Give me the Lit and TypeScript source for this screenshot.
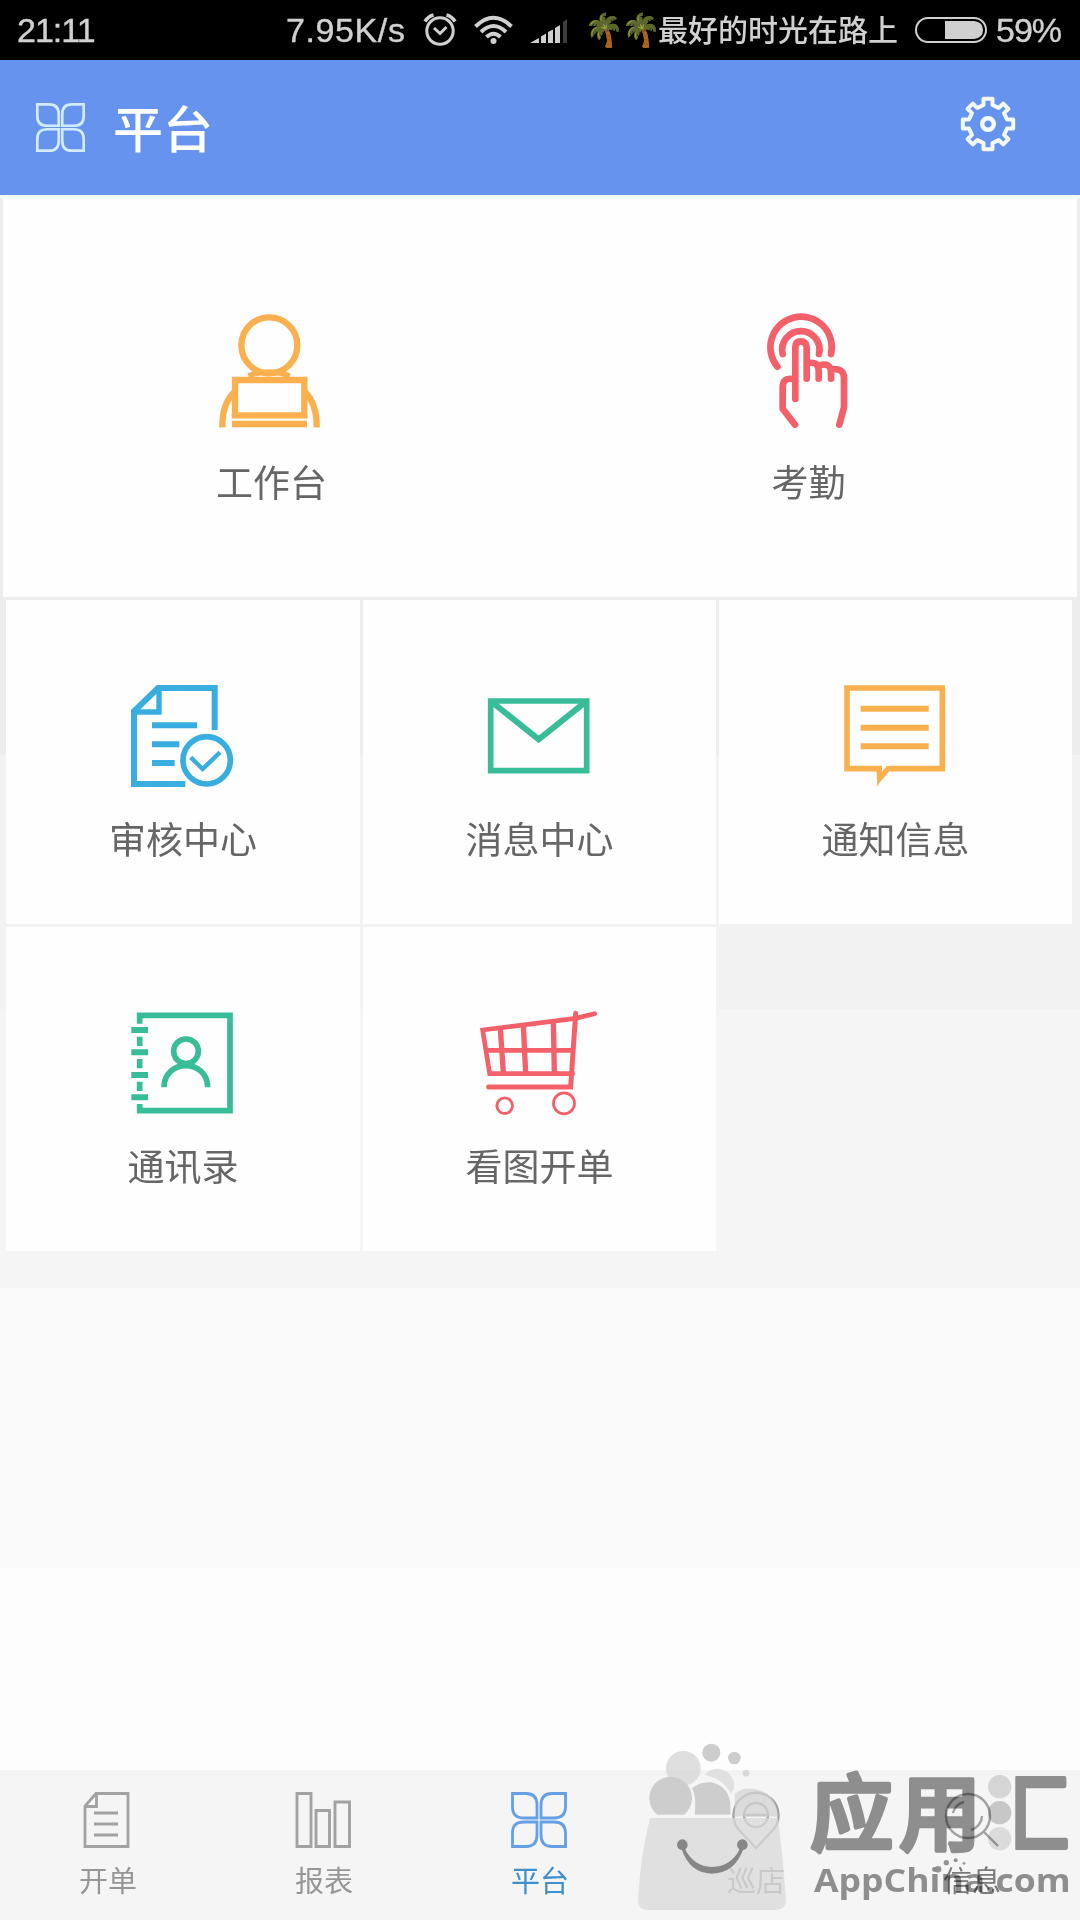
import { LitElement, html, svg, css } from "lit";
import { customElement } from "lit/decorators.js";

const ORANGE = "#fbb050";
const RED = "#f4606a";
const BLUE = "#38aee0";
const GREEN = "#38bd98";

const gearPath = (() => {
  const pts: string[] = [];
  for (let k = 0; k < 8; k++) {
    const a = (k * Math.PI) / 4;
    const w = k % 2 ? 3.7 : 4.5;
    for (const [r, t] of [[19, -w], [25.2, -w], [25.2, w], [19, w]]) {
      pts.push(`${(r * Math.cos(a) - t * Math.sin(a)).toFixed(2)} ${(r * Math.sin(a) + t * Math.cos(a)).toFixed(2)}`);
    }
  }
  return `M${pts.join("L")}Z`;
})();

const clover = (w: number) => svg`
  <g fill="none" stroke="currentColor" stroke-width=${w}>
    <path d="M1.5 1.5H15Q26 1.5 26 13V26H13Q1.5 26 1.5 15Z"/>
    <path d="M54.5 1.5H41Q30 1.5 30 13V26H43Q54.5 26 54.5 15Z"/>
    <path d="M1.5 54.5H15Q26 54.5 26 43V30H13Q1.5 30 1.5 41Z"/>
    <path d="M54.5 54.5H41Q30 54.5 30 43V30H43Q54.5 30 54.5 41Z"/>
  </g>`;

interface Tile { label: string; color: string; box: string; art: unknown; }

const TOP: Tile[] = [
  {
    label: "工作台", color: ORANGE, box: "97 58 360 360", art: svg`
      <circle cx="269" cy="164" r="84" stroke-width="19"/>
      <path d="M206 255Q240 244 269 244T330 255" stroke-width="16"/>
      <path d="M166 268H374V374H166Z" stroke-width="19"/>
      <path d="M157 400H382" stroke-width="19"/>
      <path d="M128 410Q127 340 164 304M411 410Q412 340 376 304" stroke-width="19"/>`,
  },
  {
    label: "考勤", color: RED, box: "57 58 360 360", art: svg`
      <g stroke-width="20" stroke-linecap="round" stroke-linejoin="round">
        <path d="M142 228A92 92 0 1 1 303 190"/>
        <path d="M158 190A56 56 0 1 1 267 190"/>
        <path d="M196 325V170Q196 152 212 152T230 170V264"/>
        <path d="M232 218Q266 210 266 240V264M268 224Q303 214 303 246V264M305 236Q342 232 342 262V350L328 402"/>
        <path d="M192 266Q158 258 158 290V354L195 402"/>
      </g>`,
  },
];

const TILES: Tile[] = [
  {
    label: "审核中心", color: BLUE, box: "99 45 360 360", art: svg`
      <path d="M374 210V84H204L132 154V372H286" stroke-width="18"/>
      <path d="M207 84V156H136" stroke-width="16"/>
      <path d="M186 196H321M186 253H268M186 309H254" stroke-width="18"/>
      <circle cx="350" cy="301" r="71" stroke-width="17"/>
      <path d="M302 292L338 327L390 277" stroke-width="13"/>`,
  },
  {
    label: "消息中心", color: GREEN, box: "58 15 360 360", art: svg`
      <path d="M90 93H378V302H90Z" stroke-width="17"/>
      <path d="M96 98L234 208L372 98" stroke-width="18"/>`,
  },
  {
    label: "通知信息", color: ORANGE, box: "106 45 360 360", art: svg`
      <path d="M244 326H139V84H425V326H268" stroke-width="17"/>
      <path d="M227 318H243V337L258 318H280L243 360Q236 368 230 380Z" fill="currentColor" stroke="none"/>
      <path d="M180 146H384M180 203H384M180 259H384" stroke-width="18"/>`,
  },
  {
    label: "通讯录", color: GREEN, box: "99 36 360 360", art: svg`
      <path d="M149 101V76H420V362H149V342" stroke-width="17"/>
      <path d="M149 140V168M149 207V235M149 275V303" stroke-width="17"/>
      <path d="M124 120H174M124 187H174M124 255H174M124 322H174" stroke-width="18"/>
      <circle cx="288" cy="184" r="37" stroke-width="17"/>
      <path d="M222 292C222 205 353 205 353 292" stroke-width="17"/>`,
  },
  {
    label: "看图开单", color: RED, box: "88 36 360 360", art: svg`
      <path d="M432 71L374 85L96 120L117 251H366" stroke-width="14" stroke-linecap="round"/>
      <path d="M375 70L360 291H114" stroke-width="15" stroke-linecap="round"/>
      <path d="M106 181H368" stroke-width="14"/>
      <path d="M149 116L158 248M218 106L225 248M308 94L311 248" stroke-width="16"/>
      <circle cx="162" cy="347" r="23.500" stroke-width="8.500"/>
      <circle cx="340" cy="340" r="31.500" stroke-width="8.500"/>`,
  },
];

const TABS = [
  { label: "开单", cls: "", art: svg`<g fill="none" stroke="currentColor" stroke-width="2.800">
      <path d="M16 1.500H48V54.500H5V14Z M16.500 1.500V14.500H5"/><path d="M14 21H38M14 32H38M14 43H38" stroke-width="3.200"/></g>` },
  { label: "报表", cls: "", art: svg`<g fill="none" stroke="currentColor" stroke-width="2.900">
      <path d="M1 1.500H15V54.500H1ZM20 18.500H33.500V54.500H20ZM39 10H53.500V54.500H39Z"/></g>` },
  { label: "平台", cls: "on", art: svg`<g transform="translate(-1 0)">${clover(2.8)}</g>` },
  { label: "巡店", cls: "faint", art: svg`<g fill="none" stroke="currentColor" stroke-width="2.4">
      <path d="M28 56L11 38A22.500 22.500 0 1 1 45 38Z"/><circle cx="28" cy="23" r="12"/><path d="M16 23H40"/></g>` },
  { label: "信息", cls: "dark", art: svg`<g fill="none" stroke="currentColor" stroke-width="2.4">
      <circle cx="24" cy="24" r="22"/><path d="M9 21A15 15 0 0 1 20 10M38 24A15 15 0 0 1 27 38M40 40L54 54"/></g>` },
];

@customElement("app-root")
export class AppRoot extends LitElement {
  static styles = css`
    :host {
      display: block;
      font-family: "Noto Sans CJK SC", sans-serif;
    }
    svg { display: block; flex: none; overflow: visible; }
    .page {
      position: relative;
      display: flex;
      flex-direction: column;
      width: 1080px;
      height: 1920px;
      overflow: hidden;
      background: #fdfdfd;
    }
    .status {
      display: flex;
      align-items: center;
      box-sizing: border-box;
      height: 60px;
      padding: 0 18px 0 17px;
      background: #000;
      color: #d0d0d0;
      font: 34px/60px "Liberation Sans", sans-serif;
      -webkit-text-stroke: 0.4px #d0d0d0;
      white-space: nowrap;
    }
    .time { flex: 1; letter-spacing: -1px; }
    .rate { width: 121px; margin-right: 17px; letter-spacing: 0.6px; }
    .alarm { margin-right: 18px; }
    .wifi { margin-right: 17px; }
    .signal { margin-right: 16px; }
    .palm { width: 37px; font: 32px/56px "Noto Color Emoji", sans-serif; opacity: .8; }
    .carrier { width: 241px; margin-right: 16px; font: 500 30px/54px "Noto Sans CJK SC", sans-serif; padding-bottom: 4px; -webkit-text-stroke: 0; }
    .battery { margin-right: 9px; }
    .pct { width: 66px; letter-spacing: -1px; }
    .header {
      display: flex;
      align-items: center;
      box-sizing: border-box;
      height: 135px;
      padding: 0 64px 0 36px;
      background: #6593ee;
      color: #fff;
    }
    .brand { color: #d2ebff; }
    .title {
      flex: 1;
      margin: 0 0 4px 28px;
      font-size: 50px;
      font-weight: 500;
      line-height: 70px;
    }
    .gear { margin-bottom: 7px; }
    .body {
      flex: 1;
      padding-top: 3px;
      background: linear-gradient(#ededed 0 560px, #f2f2f2 560px 814px, #f5f5f5 814px 1093px, #fafafa 1093px 1373px, #fdfdfd 1373px);
      box-shadow: inset 0 3px #f0f8f2;
    }
    .panel {
      display: grid;
      grid-template-columns: 1fr 1fr;
      height: 399px;
      margin: 0 3px 3px;
      background: #fefefe;
    }
    .tiles {
      display: grid;
      grid-template-columns: 354px 353px 353px;
      grid-auto-rows: 324px;
      gap: 3px;
      padding-left: 6px;
    }
    .cell {
      display: flex;
      flex-direction: column;
      align-items: center;
      background: #fefefe;
      color: #666;
      font-size: 37px;
      line-height: 50px;
    }
    .tiles .cell { padding-top: 75px; box-sizing: border-box; }
    .tiles .cell span { margin-top: 18px; }
    .panel .cell { padding-top: 112px; box-sizing: border-box; height: 399px; }
    .panel .cell span { margin-top: 26px; }
    .tabs {
      display: grid;
      grid-template-columns: repeat(5, 1fr);
      height: 150px;
      background: #f5f5f5;
      box-shadow: inset 0 5px #f3f3f3;
    }
    .tab {
      display: flex;
      flex-direction: column;
      align-items: center;
      padding-top: 22px;
      color: #a2a2a2;
      font-size: 29px;
      line-height: 40px;
    }
    .tab span { margin-top: 11px; color: #969696; }
    .tab.on { color: #65a0e4; }
    .tab.on span { color: #3d8fd0; }
    .tab.dark span { color: #7a7a7a; }
    .mark {
      position: absolute;
      left: 600px;
      top: 1720px;
      mix-blend-mode: multiply;
    }
    .haze {
      position: absolute;
      left: 600px;
      top: 1720px;
    }
    .logo { font: 500 250px "Noto Sans CJK SC", sans-serif; }
    .site { font: 700 98px "Open Sans", sans-serif; }
  `;

  private cell(t: Tile) {
    return html`<div class="cell">
      <svg width="120" height="120" viewBox=${t.box} fill="none" stroke=${t.color} color=${t.color}>${t.art}</svg>
      <span>${t.label}</span>
    </div>`;
  }

  render() {
    return html`<div class="page">
      <div class="status">
        <div class="time">21:11</div>
        <div class="rate">7.95K/s</div>
        <svg class="alarm" width="32" height="32" viewBox="0 1 32 32" fill="none" stroke="#d0d0d0" stroke-width="3">
          <circle cx="16" cy="18" r="13.200"/><path d="M10 15L16 20.500L22.500 14"/><path d="M1 8.500Q4 3.500 9.500 2M31 8.500Q28 3.500 22.500 2" stroke-width="3.600"/>
        </svg>
        <svg class="wifi" width="39" height="30" viewBox="0 0 39 30" fill="none" stroke="#d0d0d0" stroke-width="4">
          <path d="M1.500 11.500Q19.500 -6 37.500 11.500M7 17Q19.500 5 32 17M12.500 22Q19.500 15.500 26.500 22"/><circle cx="19.500" cy="26" r="3" fill="#d0d0d0" stroke="none"/>
        </svg>
        <svg class="signal" width="38" height="26" viewBox="0 -1 38 26" fill="#d0d0d0">
          <path d="M0 25L9 20V25ZM11 18.500L16 15.500V25H11ZM18 14L23 11.500V25H18ZM25 10L30 7V25H25Z"/><path d="M33 4L37 1V25H33Z" fill="#3c3c3c"/>
        </svg>
        <div class="palm">🌴</div><div class="palm">🌴</div>
        <div class="carrier">最好的时光在路上</div>
        <svg class="battery" width="72" height="26" viewBox="0 0 72 26">
          <rect x="1" y="1" width="70" height="24" rx="12" fill="none" stroke="#d0d0d0" stroke-width="2"/>
          <path d="M30 4H59Q68 5 68 13T59 22H30Z" fill="#d0d0d0"/>
        </svg>
        <div class="pct">59%</div>
      </div>
      <div class="header">
        <svg class="brand" width="49" height="49" viewBox="0 0 56 56">${clover(3.1)}</svg>
        <h1 class="title">平台</h1>
        <svg class="gear" width="56" height="56" viewBox="-28 -28 56 56" fill="none" stroke="#f4fbff" stroke-width="4" stroke-linejoin="round">
          <path d=${gearPath}/><circle r="5.800" stroke-width="4.400"/>
        </svg>
      </div>
      <div class="body">
        <div class="panel">${TOP.map((t) => this.cell(t))}</div>
        <div class="tiles">${TILES.map((t) => this.cell(t))}</div>
      </div>
      <div class="tabs">
        ${TABS.map((t) => html`<div class="tab ${t.cls}">
          <svg width="56" height="56" viewBox="0 0 56 56">${t.art}</svg>
          <span>${t.label}</span>
        </div>`)}
      </div>
      <svg class="haze" width="480" height="200" viewBox="0 0 1440 600">
        <g fill="#dadada" opacity=".75">
          <circle cx="250" cy="145" r="52" fill="#d6d6d6"/>
          <path d="M314 165A50 50 0 0 1 402 205L393 222Q370 175 314 165Z"/>
          <path d="M404 222Q440 190 500 220Q530 245 534 290H404Z" fill="#d4d4d4"/>
          <path d="M150 294H534Q550 420 558 540Q558 568 530 570H140Q114 568 114 540Q122 400 150 294Z"/>
        </g>
        <g fill="#cdcdcd">
          <path d="M172 284A64 64 0 1 1 252 284Z"/>
          <path d="M284 284Q290 230 276 205Q300 184 335 187Q385 200 391 250V284Z"/>
          <circle cx="334" cy="98" r="27"/><circle cx="403" cy="114" r="19"/><circle cx="438" cy="160" r="10" fill="#d8d8d8"/>
        </g>
        <g fill="#868686"><circle cx="247" cy="374" r="16"/><circle cx="427" cy="374" r="16"/>
          <path d="M244 385Q268 460 336 461Q405 460 431 385L420 385Q395 440 336 441Q280 440 254 385Z"/></g>
      </svg>
      <svg class="mark" width="480" height="200" viewBox="0 0 1440 600">
        <defs><clipPath id="right"><rect x="1246" y="140" width="190" height="270"/></clipPath></defs>
        <g class="logo" fill="#949494" stroke="#949494" stroke-width="13" stroke-linejoin="round">
          <text x="630" y="371" textLength="250" lengthAdjust="spacingAndGlyphs">应</text>
          <text x="897" y="371" textLength="246" lengthAdjust="spacingAndGlyphs">用</text>
          <g clip-path="url(#right)"><text x="1164" y="371" textLength="244" lengthAdjust="spacingAndGlyphs">汇</text></g>
        </g>
        <g fill="#dedede"><circle cx="1199" cy="200" r="35"/><circle cx="1199" cy="278" r="35" fill="#cfcfcf"/><circle cx="1199" cy="356" r="35" fill="#e4e4e4"/></g>
        <g fill="#9a9a9a"><circle cx="1014" cy="448" r="10"/><circle cx="1039" cy="428" r="8"/><circle cx="1067" cy="421" r="6"/><circle cx="1092" cy="430" r="4"/></g>
        <text class="site" x="642" y="515" fill="#949494" textLength="770" lengthAdjust="spacingAndGlyphs">AppChina.com</text>
      </svg>
    </div>`;
  }
}
